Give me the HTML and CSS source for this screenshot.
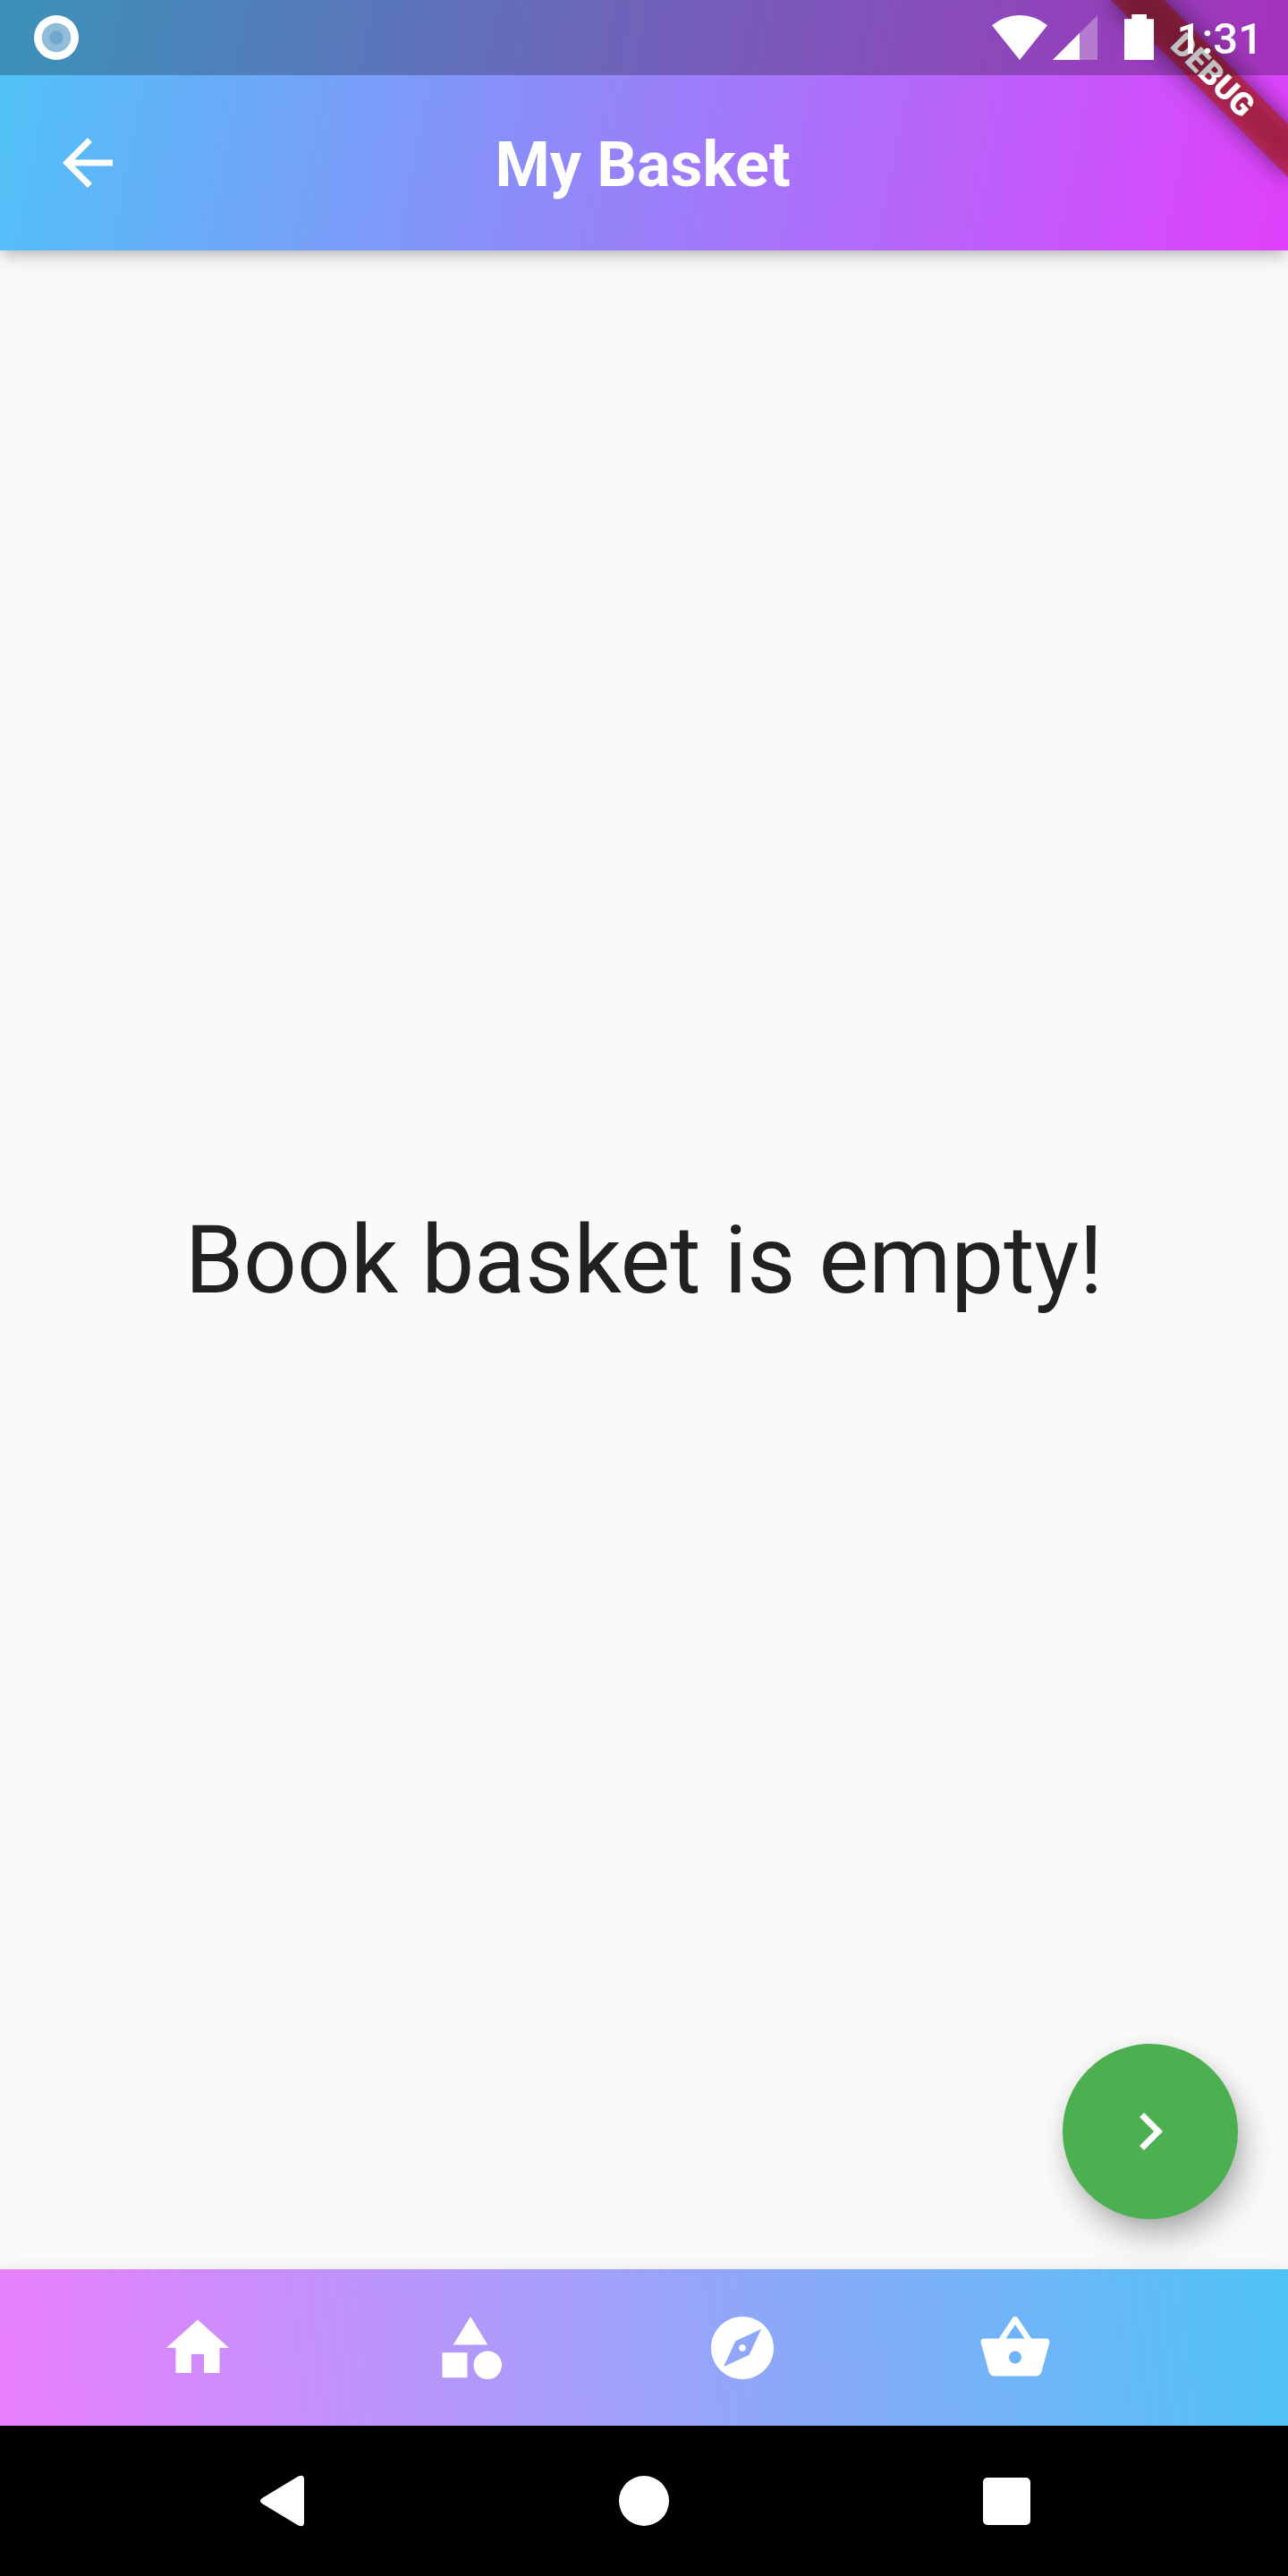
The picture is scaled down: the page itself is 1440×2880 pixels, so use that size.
FILE: index.html
```html
<!DOCTYPE html>
<html lang="en">
<head>
<meta charset="utf-8">
<title>My Basket</title>
<link rel="stylesheet" href="styles.css">
</head>
<body>
<div class="screen">
  <header class="header">
    <div class="status">
      <svg class="status-dot" viewBox="0 0 50 50"><circle cx="25" cy="25" r="25" fill="#fff"/><circle cx="25" cy="25" r="16.3" fill="#92bdd8"/><circle cx="25" cy="25" r="7.7" fill="#70a8cb"/></svg>
      <div class="status-right">
        <svg class="wifi" viewBox="0 0 62 50"><path d="M31 50 0 11.300Q14 0 31 0T62 11.300Z" fill="#fff"/></svg>
        <svg class="signal" viewBox="0 0 50 50"><path d="M0 50 50 0V50Z" fill="#fff" fill-opacity=".3"/><path d="M0 50 30 20V50Z" fill="#fff"/></svg>
        <svg class="battery" viewBox="0 0 33 51"><path d="M8.300 0H25V5.200H33V51H0V5.200H8.300Z" fill="#fff"/></svg>
        <span class="clock">1:31</span>
      </div>
    </div>
    <div class="appbar">
      <svg class="icon" viewBox="0 0 24 24"><path d="M20 11H7.830l5.590-5.590L12 4l-8 8 8 8 1.410-1.410L7.830 13H20v-2z"/></svg>
      <h1 class="title">My Basket</h1>
    </div>
    <div class="ribbon-clip"><div class="ribbon">DEBUG</div></div>
  </header>
  <main class="body">
    <p class="message">Book basket is empty!</p>
    <button class="fab" aria-label="Next"><svg class="icon" viewBox="0 0 24 24"><path d="M10 6 8.590 7.410 13.170 12l-4.580 4.590L10 18l6-6z"/></svg></button>
  </main>
  <nav class="tabs">
    <svg class="icon" viewBox="0 0 24 24"><path d="M10 20v-6h4v6h5v-8h3L12 3 2 12h3v8z"/></svg>
    <svg class="icon" viewBox="0 0 24 24"><path d="M12 2 6.500 11h11zM3 13.500h8v8H3z"/><circle cx="17.500" cy="17.500" r="4.500"/></svg>
    <svg class="icon" viewBox="0 0 24 24"><path d="M12 10.900c-.61 0-1.100.49-1.100 1.100s.49 1.100 1.100 1.100c.61 0 1.100-.49 1.100-1.100s-.49-1.100-1.100-1.100zM12 2C6.480 2 2 6.480 2 12s4.480 10 10 10 10-4.480 10-10S17.520 2 12 2zm2.190 12.190L6 18l3.810-8.190L18 6l-3.810 8.190z"/></svg>
    <svg class="icon" viewBox="0 0 24 24"><path d="M17.210 9l-4.380-6.560c-.19-.28-.51-.42-.83-.42-.32 0-.64.14-.83.430L6.790 9H2c-.55 0-1 .45-1 1 0 .09.010.18.040.27l2.540 9.270c.23.840 1 1.460 1.920 1.460h13c.92 0 1.690-.62 1.930-1.460l2.540-9.270L23 10c0-.55-.45-1-1-1h-4.790zM9 9l3-4.400L15 9H9zm3 8c-1.100 0-2-.9-2-2s.9-2 2-2 2 .9 2 2-.9 2-2 2z"/></svg>
  </nav>
  <footer class="system">
    <svg class="sys-back" viewBox="0 0 49 58"><path d="M2 26 42.500 1.500Q49-1 49 5V53Q49 59 42.500 56.500L2 32Q-2 29 2 26Z" fill="#fff"/></svg>
    <span class="sys-home"></span>
    <span class="sys-recent"></span>
  </footer>
</div>
</body>
</html>
```
FILE: styles.css
```css
* { box-sizing: border-box; }

body {
  margin: 0;
  font-family: Roboto, "Liberation Sans", sans-serif;
}

.screen {
  width: 1440px;
  height: 2880px;
  display: flex;
  flex-direction: column;
  background: #fafafa;
  overflow: hidden;
}

svg { display: block; flex: none; }

.icon {
  width: 84px;
  height: 84px;
  fill: #fff;
}

/* Header: status bar and app bar share one gradient */
.header {
  position: relative;
  z-index: 1;
  height: 280px;
  flex: none;
  background: linear-gradient(101deg, #4fc3f7, #e040fb);
  box-shadow: 0 7px 14px -3.500px rgba(0, 0, 0, .2), 0 14px 17.500px rgba(0, 0, 0, .05), 0 3.500px 35px rgba(0, 0, 0, .04);
}

.status {
  position: relative;
  z-index: 2;
  height: 84px;
  padding: 0 28px 0 38px;
  display: flex;
  align-items: center;
  justify-content: space-between;
  background: rgba(0, 0, 0, .25);
}

.status-dot { width: 50px; height: 50px; }

.status-right {
  display: flex;
  align-items: flex-end;
  height: 50px;
}

.wifi { width: 62px; height: 50px; }
.signal { width: 50px; height: 50px; margin-left: 6px; }
.battery { width: 33px; height: 51px; margin-left: 30px; }

.clock {
  margin-left: 26px;
  font-size: 49px;
  font-weight: 500;
  line-height: 46px;
  color: #fff;
}

.appbar {
  height: 196px;
  padding: 0 57px 0 56px;
  display: grid;
  grid-template-columns: 84px 1fr 84px;
  align-items: center;
}

.title {
  margin: 0;
  padding: 4px 2px 0 0;
  font-size: 70px;
  font-weight: 700;
  line-height: 82px;
  text-align: center;
  color: #fff;
}

/* Corner ribbon */
.ribbon-clip {
  position: absolute;
  z-index: 1;
  top: 0;
  right: 0;
  width: 280px;
  height: 280px;
  overflow: hidden;
}

.ribbon {
  position: absolute;
  left: 140px;
  top: 98px;
  width: 280px;
  height: 42px;
  transform-origin: 140px -98px;
  transform: rotate(45deg);
  isolation: isolate;
  font-size: 35.700px;
  font-weight: 900;
  line-height: 42px;
  text-align: center;
  color: #fff;
}

.ribbon::before,
.ribbon::after {
  content: "";
  position: absolute;
  z-index: -1;
  inset: 0;
}

.ribbon::before {
  z-index: -2;
  background: rgba(0, 0, 0, .5);
  filter: blur(13.900px);
}

.ribbon::after { background: rgba(183, 28, 28, .627); }

.body {
  position: relative;
  flex: 1;
  display: flex;
  align-items: center;
  justify-content: center;
}

.message {
  margin: 0;
  padding-top: 2px;
  font-size: 105px;
  line-height: 123px;
  color: #212121;
}

.fab {
  position: absolute;
  right: 56px;
  bottom: 56px;
  width: 196px;
  height: 196px;
  padding: 0;
  border: 0;
  border-radius: 50%;
  display: flex;
  align-items: center;
  justify-content: center;
  background: #4caf50;
  box-shadow: 8px 20px 38px -4px rgba(0, 0, 0, .33), 0 2px 20px rgba(0, 0, 0, .06);
}

.tabs {
  position: relative;
  height: 175px;
  flex: none;
  padding: 0 153px 0 69px;
  display: grid;
  grid-template-columns: repeat(4, 1fr);
  align-items: center;
  justify-items: center;
  background: linear-gradient(83.070deg, #ea80fc, #4fc3f7);
  box-shadow: 0 0 22px rgba(0, 0, 0, .08);
}

.system {
  position: relative;
  height: 168px;
  flex: none;
  padding: 0 288px 0 291px;
  display: flex;
  align-items: center;
  justify-content: space-between;
  background: #000;
}

.sys-back { width: 49px; height: 58px; }

.sys-home {
  width: 56px;
  height: 56px;
  border-radius: 50%;
  background: #fff;
}

.sys-recent {
  width: 53px;
  height: 53px;
  border-radius: 5px;
  background: #fff;
}
```
